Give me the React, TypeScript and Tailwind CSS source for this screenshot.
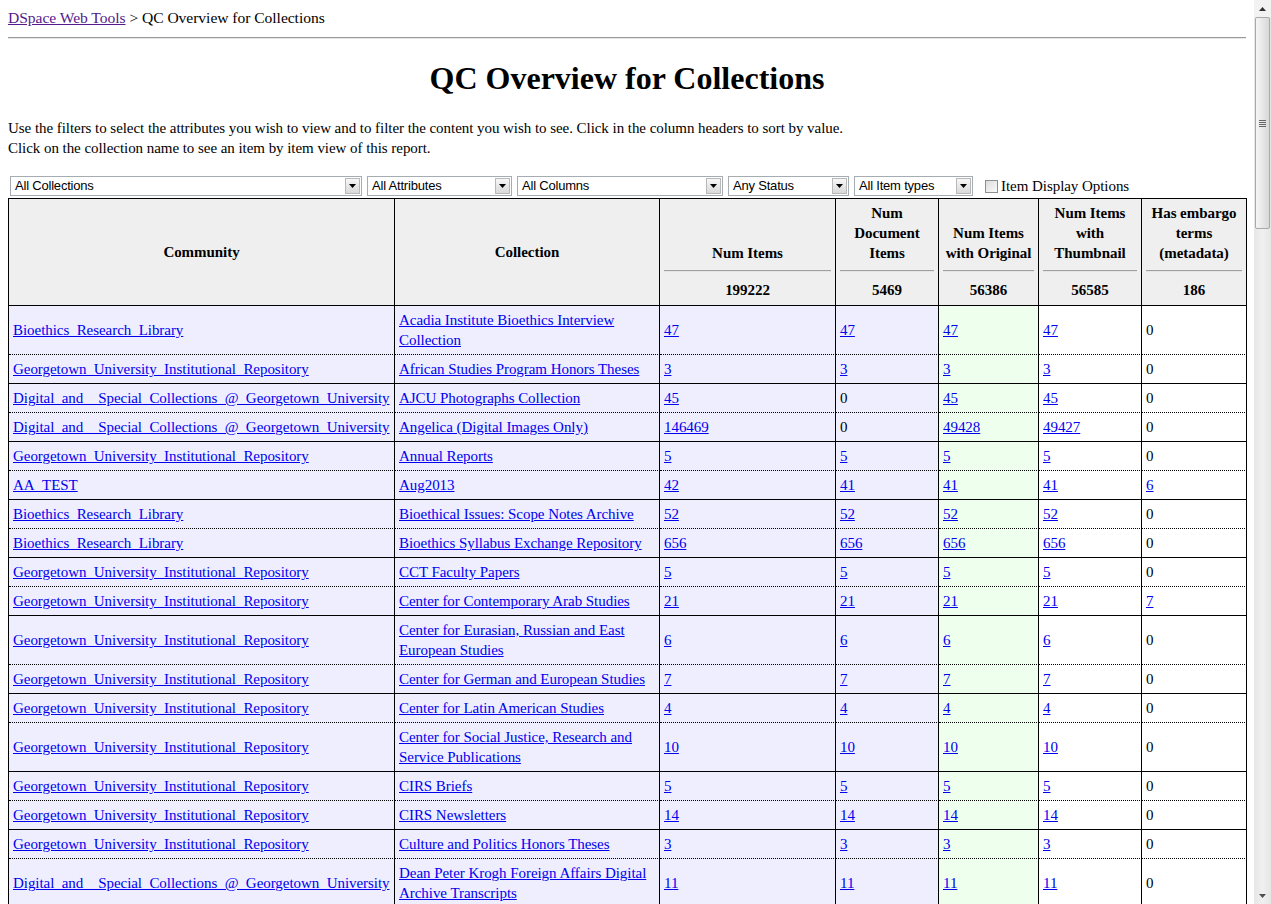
import { FC, ReactNode } from 'react';

type Row = {
  community: string;
  collection: string;
  items: number;
  docs: number;
  orig: number;
  thumb: number;
  embargo: number;
};

const rows: Row[] = [
  { community: 'Bioethics_Research_Library', collection: 'Acadia Institute Bioethics Interview Collection', items: 47, docs: 47, orig: 47, thumb: 47, embargo: 0 },
  { community: 'Georgetown_University_Institutional_Repository', collection: 'African Studies Program Honors Theses', items: 3, docs: 3, orig: 3, thumb: 3, embargo: 0 },
  { community: 'Digital_and__Special_Collections_@_Georgetown_University', collection: 'AJCU Photographs Collection', items: 45, docs: 0, orig: 45, thumb: 45, embargo: 0 },
  { community: 'Digital_and__Special_Collections_@_Georgetown_University', collection: 'Angelica (Digital Images Only)', items: 146469, docs: 0, orig: 49428, thumb: 49427, embargo: 0 },
  { community: 'Georgetown_University_Institutional_Repository', collection: 'Annual Reports', items: 5, docs: 5, orig: 5, thumb: 5, embargo: 0 },
  { community: 'AA_TEST', collection: 'Aug2013', items: 42, docs: 41, orig: 41, thumb: 41, embargo: 6 },
  { community: 'Bioethics_Research_Library', collection: 'Bioethical Issues: Scope Notes Archive', items: 52, docs: 52, orig: 52, thumb: 52, embargo: 0 },
  { community: 'Bioethics_Research_Library', collection: 'Bioethics Syllabus Exchange Repository', items: 656, docs: 656, orig: 656, thumb: 656, embargo: 0 },
  { community: 'Georgetown_University_Institutional_Repository', collection: 'CCT Faculty Papers', items: 5, docs: 5, orig: 5, thumb: 5, embargo: 0 },
  { community: 'Georgetown_University_Institutional_Repository', collection: 'Center for Contemporary Arab Studies', items: 21, docs: 21, orig: 21, thumb: 21, embargo: 7 },
  { community: 'Georgetown_University_Institutional_Repository', collection: 'Center for Eurasian, Russian and East European Studies', items: 6, docs: 6, orig: 6, thumb: 6, embargo: 0 },
  { community: 'Georgetown_University_Institutional_Repository', collection: 'Center for German and European Studies', items: 7, docs: 7, orig: 7, thumb: 7, embargo: 0 },
  { community: 'Georgetown_University_Institutional_Repository', collection: 'Center for Latin American Studies', items: 4, docs: 4, orig: 4, thumb: 4, embargo: 0 },
  { community: 'Georgetown_University_Institutional_Repository', collection: 'Center for Social Justice, Research and Service Publications', items: 10, docs: 10, orig: 10, thumb: 10, embargo: 0 },
  { community: 'Georgetown_University_Institutional_Repository', collection: 'CIRS Briefs', items: 5, docs: 5, orig: 5, thumb: 5, embargo: 0 },
  { community: 'Georgetown_University_Institutional_Repository', collection: 'CIRS Newsletters', items: 14, docs: 14, orig: 14, thumb: 14, embargo: 0 },
  { community: 'Georgetown_University_Institutional_Repository', collection: 'Culture and Politics Honors Theses', items: 3, docs: 3, orig: 3, thumb: 3, embargo: 0 },
  { community: 'Digital_and__Special_Collections_@_Georgetown_University', collection: 'Dean Peter Krogh Foreign Affairs Digital Archive Transcripts', items: 11, docs: 11, orig: 11, thumb: 11, embargo: 0 },
];

const Num: FC<{ n: number }> = ({ n }) =>
  n === 0 ? <span>0</span> : <a className="text-[#0000ee] underline">{n}</a>;

const Select: FC<{ label: string; width: string }> = ({ label, width }) => (
  <div
    className={`flex h-[20px] items-center border border-[#a5acb2] bg-white pl-[4px] pr-[1px] ${width}`}
  >
    <span className="flex-1 font-['Liberation_Sans',Arial,sans-serif] text-[13px] leading-[18px] tracking-[-0.2px] text-black">
      {label}
    </span>
    <span className="flex h-[16px] w-[15px] items-center justify-center border border-[#b8b8b8] bg-gradient-to-b from-[#f7f7f7] to-[#d9d9d9]">
      <svg width="7" height="4" viewBox="0 0 7 4">
        <path d="M0 0h7L3.5 4z" fill="#000" />
      </svg>
    </span>
  </div>
);

const StatHead: FC<{ title: ReactNode; total: number; width: string }> = ({ title, total, width }) => (
  <th className={`${width} border-r border-b border-black bg-[#efefef] px-[4px] pt-[4px] pb-[5px] align-bottom font-bold`}>
    <div>{title}</div>
    <div className="mt-[7px] mb-[8px] h-[2px] border-t border-[#a0a0a0] border-b border-b-[#e4e4e4]" />
    <div>{total}</div>
  </th>
);

const ScrollBar: FC = () => (
  <div className="flex h-full w-[17px] flex-col bg-gradient-to-r from-[#e6e6e6] via-[#f0f0f0] to-[#e6e6e6]">
    <div className="flex h-[17px] items-center justify-center bg-[#f2f2f2]">
      <svg width="7" height="4" viewBox="0 0 7 4">
        <path d="M3.5 0L7 4H0z" fill="#303030" />
      </svg>
    </div>
    <div className="mx-[1px] flex h-[212px] items-center justify-center rounded-[2px] border border-[#a9a9a9] bg-gradient-to-r from-[#f6f6f6] to-[#d8d8d8]">
      <div className="flex flex-col gap-[1px]">
        <div className="h-[1px] w-[7px] bg-[#666]" />
        <div className="h-[1px] w-[7px] bg-[#666]" />
        <div className="h-[1px] w-[7px] bg-[#666]" />
        <div className="h-[1px] w-[7px] bg-[#666]" />
      </div>
    </div>
    <div className="flex-1" />
    <div className="flex h-[17px] items-center justify-center">
      <svg width="7" height="4" viewBox="0 0 7 4">
        <path d="M0 0h7L3.5 4z" fill="#505050" />
      </svg>
    </div>
  </div>
);

const App: FC = () => {
  return (
    <div className="flex h-[904px] w-[1271px] overflow-hidden bg-white font-['Liberation_Serif','Times_New_Roman',serif] text-[15px] leading-[20px] tracking-[-0.05px] text-black">
      <div className="w-[1254px] overflow-hidden px-[8px] pt-[8px]">
        <div className="text-[15.6px]">
          <a className="text-[#551a8b] underline">DSpace Web Tools</a> &gt; QC Overview for Collections
        </div>
        <div className="mt-[9px] h-[2px] border-t border-[#9a9a9a] border-b border-b-[#e8e8e8]" />

        <h1 className="mt-[21px] mb-[21px] text-center text-[32px] leading-[37px] font-bold tracking-normal">
          QC Overview for Collections
        </h1>

        <p>
          Use the filters to select the attributes you wish to view and to filter the content you wish to see. Click in the column headers to sort by value.
          <br />
          Click on the collection name to see an item by item view of this report.
        </p>

        <div className="mt-[18px] ml-[2px] flex items-center gap-[5px]">
          <Select label="All Collections" width="w-[352px]" />
          <Select label="All Attributes" width="w-[145px]" />
          <Select label="All Columns" width="w-[206px]" />
          <Select label="Any Status" width="w-[121px]" />
          <Select label="All Item types" width="w-[119px]" />
          <div className="ml-[7px] flex items-center gap-[3px]">
            <span className="h-[13px] w-[13px] border border-[#8f8f8f] bg-gradient-to-br from-[#dcdcdc] to-[#fbfbfb]" />
            <span>Item Display Options</span>
          </div>
        </div>

        <table className="mt-[2px] w-[1239px] table-fixed border-separate border-spacing-0 border-t border-l border-black">
          <thead>
            <tr>
              <th className="w-[386px] border-r border-b border-black bg-[#efefef] p-[4px] align-middle font-bold">Community</th>
              <th className="w-[265px] border-r border-b border-black bg-[#efefef] p-[4px] align-middle font-bold">Collection</th>
              <StatHead width="w-[176px]" title="Num Items" total={199222} />
              <StatHead width="w-[103px]" title={<>Num<br />Document<br />Items</>} total={5469} />
              <StatHead width="w-[100px]" title={<>Num Items<br />with Original</>} total={56386} />
              <StatHead width="w-[103px]" title={<>Num Items<br />with<br />Thumbnail</>} total={56585} />
              <StatHead width="w-[105px]" title={<>Has embargo<br />terms<br />(metadata)</>} total={186} />
            </tr>
          </thead>
          <tbody>
            {rows.map((r, i) => {
              const b = i % 2 === 0 ? '[border-bottom-style:dotted]' : '';
              const cell = `border-r border-b border-black p-[4px] align-middle text-left ${b}`;
              return (
                <tr key={i}>
                  <td className={`${cell} bg-[#eeeeff]`}>
                    <a className="text-[#0000ee] underline">{r.community}</a>
                  </td>
                  <td className={`${cell} bg-[#eeeeff]`}>
                    <a className="text-[#0000ee] underline">{r.collection}</a>
                  </td>
                  <td className={`${cell} bg-[#eeeeff]`}>
                    <Num n={r.items} />
                  </td>
                  <td className={`${cell} bg-[#eeeeff]`}>
                    <Num n={r.docs} />
                  </td>
                  <td className={`${cell} bg-[#eeffee]`}>
                    <Num n={r.orig} />
                  </td>
                  <td className={`${cell} bg-white`}>
                    <Num n={r.thumb} />
                  </td>
                  <td className={`${cell} bg-white`}>
                    <Num n={r.embargo} />
                  </td>
                </tr>
              );
            })}
          </tbody>
        </table>
      </div>
      <ScrollBar />
    </div>
  );
};

export default App;
